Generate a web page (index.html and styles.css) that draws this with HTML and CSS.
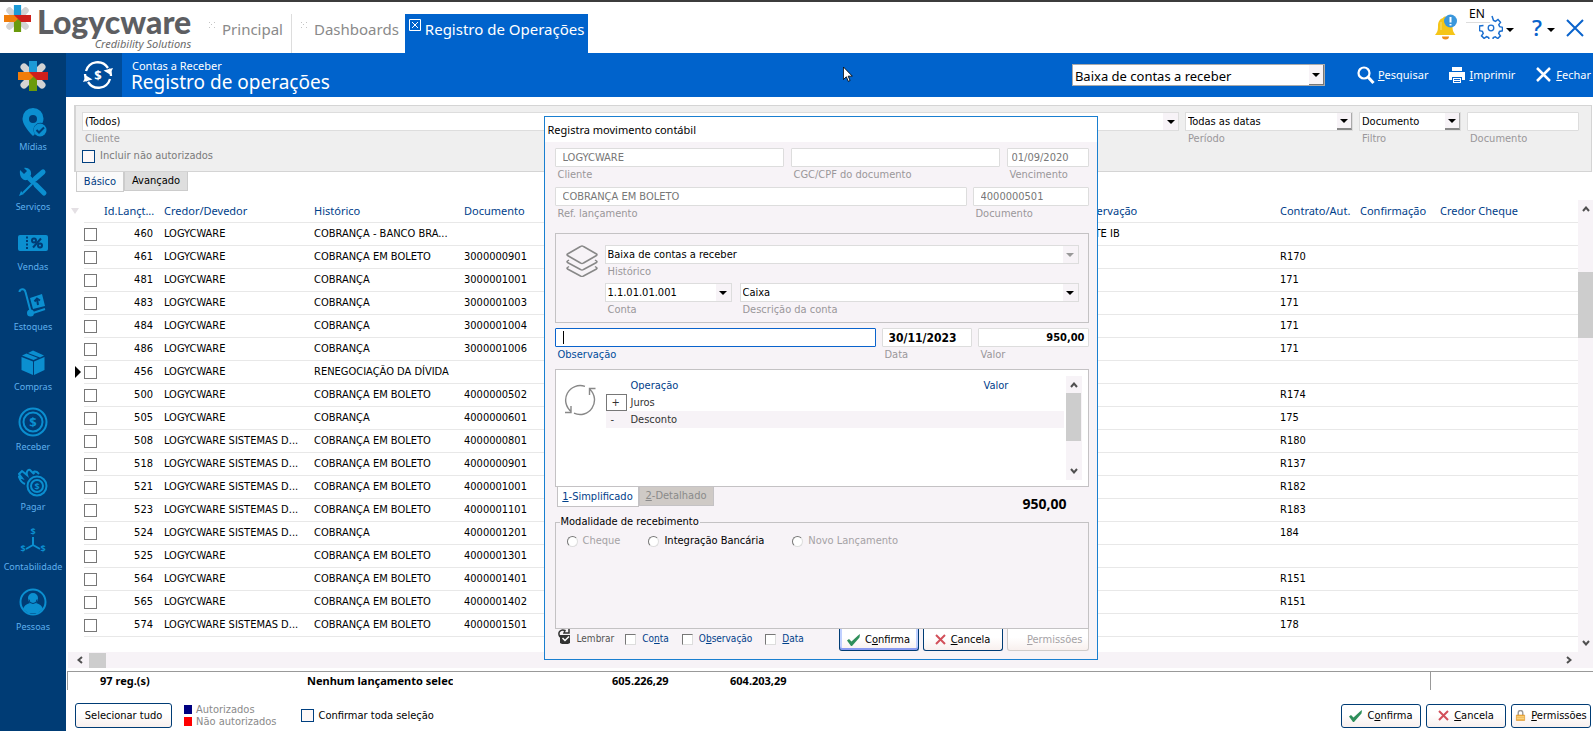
FILE: index.html
```
<!DOCTYPE html>
<html lang="pt-BR">
<head>
<meta charset="utf-8">
<title>Logycware - Registro de operações</title>
<link rel="stylesheet" href="styles.css">
</head>
<body>
<svg class="defs" aria-hidden="true">
  <symbol id="star" viewBox="0 0 30 30">
    <path stroke="#d3d3d3" stroke-width="7" stroke-linecap="round" d="M6 6l18 18M24 6 6 24"/>
    <path fill="#6a9a0b" d="M11 15h8v15h-8z"/>
    <path fill="#1c9ad6" d="M11 0h8v13h-8z"/>
    <path fill="#f07d0a" d="M0 11h12l4 4-4 4H0z"/>
    <path fill="#cf1f1b" d="M30 11H19l-8 0 8 8h11z"/>
  </symbol>
  <symbol id="check" viewBox="0 0 13 12"><path fill="#2f8f5b" d="M0 6.500 2 5l2.500 2.500L11 1.500 13 0l-.5 3.500L5 12H4z"/></symbol>
  <symbol id="cross" viewBox="0 0 11 11"><path d="M1 1l9 9M10 1 1 10" stroke="#d2505a" stroke-width="2" fill="none"/></symbol>
  <symbol id="lock" viewBox="0 0 10 12"><path d="M2.500 6V3a2.500 2.500 0 0 1 5 0v3" fill="none" stroke="#999" stroke-width="1.500"/><path fill="#f0b040" stroke="#d98c20" stroke-width=".6" d="M.5 5.500h9v6h-9z"/><path stroke="#fbe0a0" d="M1 7.500h8M1 9.500h8"/></symbol>
  <symbol id="chev-up" viewBox="0 0 8 6"><path d="M1 5l3-3.500L7 5" fill="none" stroke="#505050" stroke-width="2"/></symbol>
  <symbol id="chev-down" viewBox="0 0 8 6"><path d="M1 1l3 3.500L7 1" fill="none" stroke="#505050" stroke-width="2"/></symbol>
  <symbol id="chev-left" viewBox="0 0 6 8"><path d="M5 1 1.500 4 5 7" fill="none" stroke="#505050" stroke-width="2"/></symbol>
  <symbol id="chev-right" viewBox="0 0 6 8"><path d="M1 1l3.500 3L1 7" fill="none" stroke="#505050" stroke-width="2"/></symbol>
</svg>

<header class="top">
  <a class="brand" href="#">
    <svg class="brand-star"><use href="#star"/></svg>
    <span class="brand-text"><span class="brand-name">Logycware</span><span class="brand-tag">Credibility Solutions</span></span>
  </a>
  <nav class="tabs">
    <a class="tab" href="#"><svg class="grip" viewBox="0 0 6 6"><path d="M0 0h1v1H0zM5 0h1v1H5zM2 2h1v1H2zM0 5h1v1H0zM5 5h1v1H5z"/></svg>Principal</a>
    <a class="tab tab-div" href="#"><svg class="grip" viewBox="0 0 6 6"><path d="M0 0h1v1H0zM5 0h1v1H5zM2 2h1v1H2zM0 5h1v1H0zM5 5h1v1H5z"/></svg>Dashboards</a>
    <a class="tab tab-on" href="#"><svg class="tab-close" viewBox="0 0 12 12"><path d="M.5.5h11v11H.5zM3 3l6 6M9 3 3 9" fill="none" stroke="#fff"/></svg>Registro de Operações</a>
  </nav>
  <div class="tools">
    <svg class="bell" viewBox="0 0 22 26"><path fill="#f5c518" d="M10 2.500a2 2 0 0 1 2 1.500c4 1 5.500 4 5.500 8 0 5 1 6.500 3 9H0c2-2.500 3-4 3-9 0-4 1.500-7 5-8a2 2 0 0 1 2-1.500z"/><path fill="#ee8c1c" d="M7 22.500h7a3.500 3 0 0 1-7 0z"/><path stroke="#f9df7b" d="M6 8v8"/><circle cx="15.500" cy="7" r="6.500" fill="#3a97dc"/><path d="M15.500 3v5.500M15.500 10v1.500" stroke="#fff" stroke-width="2"/></svg>
    <span class="lang">EN</span>
    <svg class="gear" viewBox="0 0 24 24"><path fill="none" stroke="#1b6fd0" stroke-width="1.500" d="M13 1l1.500 4.500 2 .8 2.500-1.800 2.500 2.700-1.700 2.500.9 2 2.800.6v3.500l-3 .6-.8 2 1.700 2.500-2.600 2.600-2.500-1.700-2 .8-.6 2.800h-3.500l-.6-2.900-2-.8-2.500 1.700-2.600-2.600 1.700-2.500-.8-2-2.900-.6V11l4-.6"/><circle cx="12" cy="13" r="2.800" fill="none" stroke="#1b6fd0" stroke-width="1.300"/></svg>
    <span class="arrow"></span>
    <span class="help">?</span>
    <span class="arrow"></span>
    <svg class="win-x" viewBox="0 0 18 18"><path d="M1 1l16 16M17 1 1 17" stroke="#0a63cc" stroke-width="2"/></svg>
  </div>
</header>

<div class="shell">
  <aside class="side">
    <a class="side-logo" href="#"><svg viewBox="0 0 30 30"><use href="#star"/></svg></a>
    <a class="side-item" href="#"><svg viewBox="0 0 30 30"><path fill-rule="evenodd" d="M15 1a10.500 10.500 0 0 1 10.500 10.500c0 1.500-.3 3-1 4.500A7 7 0 0 0 17 27l-2 2C8 22 4.500 16 4.500 11.500A10.500 10.500 0 0 1 15 1zm0 7a4 4 0 1 0 0 8 4 4 0 0 0 0-8z"/><circle cx="22" cy="23" r="6.500"/><path class="cut" d="m18.500 23 2.500 2.500 5-5"/></svg>Mídias</a>
    <a class="side-item" href="#"><svg viewBox="0 0 30 30"><path class="ln5" d="m9 9 6 6M18 18l8 8"/><path d="M2 3l4 4 3-3-3-3c4-1 8 2 7 7l-4 5C5 14 1 10 2 3z"/><path class="ln5" d="m17 12 8-7"/><path class="ln2" d="m14 17-9 9"/><path d="m1 29 2-5 3 3z"/></svg>Serviços</a>
    <a class="side-item" href="#"><svg viewBox="0 0 30 30"><rect y="8" width="30" height="16" rx="2"/><path class="cut" stroke-dasharray="2 1.500" d="M9 9.500v13"/><circle class="cut" cx="16" cy="13.500" r="2"/><circle class="cut" cx="22" cy="18.500" r="2"/><path class="cut" d="M23 11.500l-8 9"/></svg>Vendas</a>
    <a class="side-item" href="#"><svg viewBox="0 0 30 30"><path class="ln2" d="M1.500 5c0-3 5-4.500 6 0l5 19M15 26l12-4"/><circle cx="12.500" cy="26" r="3.500"/><path d="m12 11 12-4 3 12-12 3z"/><path class="cut" d="m20 18-1-6M16.500 14.500l2.500-3 3 2"/></svg>Estoques</a>
    <a class="side-item" href="#"><svg viewBox="0 0 30 30"><path d="M3.500 10 15 14.500V28L3.500 23zM26.500 10 16 14.500V28l10.500-5zM4 8.500l4.500-2L20 11l-4.500 2zM10 6l5-2.500L26 8.500l-4 2z"/></svg>Compras</a>
    <a class="side-item" href="#"><svg viewBox="0 0 30 30"><circle class="ln2" cx="15" cy="15" r="13.500"/><circle class="ln2" cx="15" cy="15" r="9.500"/><text x="15" y="19.500">$</text></svg>Receber</a>
    <a class="side-item" href="#"><svg viewBox="0 0 30 30"><circle class="ln2" cx="19" cy="19" r="9.500"/><circle class="ln2" cx="19" cy="19" r="6"/><text class="sm" x="19" y="23">$</text><path class="ln2" d="M7 17c-3-1-5-4-6-7l3 1-3-4 3-3 5 4c-1-3 1-6 3-5l4 4c-1-3 1-3 3-2l2 2"/></svg>Pagar</a>
    <a class="side-item" href="#"><svg viewBox="0 0 30 30"><path class="ln2" d="M15 10v8M15 18l-7 4M15 18l7 4"/><text class="sm" x="15" y="8">$</text><text class="sm" x="5" y="25">$</text><text class="sm" x="25" y="25">$</text></svg>Contabilidade</a>
    <a class="side-item" href="#"><svg viewBox="0 0 30 30"><circle class="ln2" cx="15" cy="15" r="12.500"/><path d="M10 11a5 5 0 0 1 10 0c0 2-1 4-2 5 4 1 6 3 7 6l-5 4H10l-5-4c1-3 3-5 7-6-1-1-2-3-2-5z"/><path class="cut thin" d="M11 12.500a4 4 0 0 0 8 0"/></svg>Pessoas</a>
  </aside>

  <main class="main">
    <div class="bar">
      <div class="bar-icon"><svg viewBox="0 0 32 30" fill="none" stroke="#fff" stroke-width="2.300"><path d="M4 11C7 1 20-1 26 8M28 19C25 29 12 31 6 22M5 21a12 12 0 0 1-2-7M27 9a12 12 0 0 1 2 7"/><path fill="#fff" stroke="none" d="m31 8-3 6.500-6.500-4zM1 22l3-6.500 6.500 4z"/><text x="16" y="20">$</text></svg></div>
      <div class="bar-title"><span class="bar-sub">Contas a Receber</span><h1>Registro de operações</h1></div>
      <div class="combo combo-bar"><select aria-label="Operação"><option>Baixa de contas a receber</option></select><span class="combo-btn"><i class="arrow"></i></span></div>
      <div class="bar-actions">
        <button type="button"><svg viewBox="0 0 18 18" fill="none" stroke="#fff"><circle cx="7" cy="7" r="5.500" stroke-width="2.200"/><path d="m11 11 5.500 6" stroke-width="3"/></svg><span><u>P</u>esquisar</span></button>
        <button type="button"><svg viewBox="0 0 18 18" fill="#fff"><path d="M4 1h10v4H4zM1 6h16v8h-3v-3H4v3H1zM5 12h8v5H5z"/><path d="M6 13.500h6M6 15.500h6" stroke="#0a63cc"/></svg><span><u>I</u>mprimir</span></button>
        <button type="button"><svg viewBox="0 0 18 18" stroke="#fff" stroke-width="2.500"><path d="m2 2 13 13M15 2 2 15"/></svg><span><u>F</u>echar</span></button>
      </div>
    </div>

    <section class="filters">
      <div class="filter-row">
        <div class="field grow"><div class="combo"><select id="f-cli"><option>(Todos)</option></select><span class="combo-btn"><i class="arrow"></i></span></div><label for="f-cli">Cliente</label></div>
        <div class="field w-per"><div class="combo"><select id="f-per"><option>Todas as datas</option></select><span class="combo-btn shade"><i class="arrow"></i></span></div><label for="f-per">Período</label></div>
        <div class="field w-fil"><div class="combo"><select id="f-fil"><option>Documento</option></select><span class="combo-btn shade"><i class="arrow"></i></span></div><label for="f-fil">Filtro</label></div>
        <div class="field w-doc"><input id="f-doc" type="text"><label for="f-doc">Documento</label></div>
      </div>
      <label class="check muted"><input class="box blue" type="checkbox">Incluir não autorizados</label>
    </section>
    <div class="subtabs"><button class="subtab subtab-on" type="button">Básico</button><button class="subtab" type="button">Avançado</button></div>

    <section class="grid-area">
      <div class="grid-scroll">
        <table class="grid">
          <colgroup><col class="c-mark"><col class="c-chk"><col class="c-id"><col class="c-name"><col class="c-name"><col class="c-doc"><col><col class="c-obs"><col class="c-sm"><col class="c-sm"><col class="c-last"></colgroup>
          <thead><tr><th><i class="funnel"></i></th><th></th><th class="th-id">Id.Lançt...</th><th>Credor/Devedor</th><th>Histórico</th><th>Documento</th><th></th><th>Observação</th><th>Contrato/Aut.</th><th>Confirmação</th><th>Credor Cheque</th></tr></thead>
          <tbody>
            <tr><td></td><td><input class="box" type="checkbox" aria-label="460"></td><td>460</td><td>LOGYCWARE</td><td>COBRANÇA - BANCO BRA...</td><td></td><td></td><td>TESTE IB</td><td></td><td></td><td></td></tr>
            <tr><td></td><td><input class="box" type="checkbox" aria-label="461"></td><td>461</td><td>LOGYCWARE</td><td>COBRANÇA EM BOLETO</td><td>3000000901</td><td></td><td></td><td>R170</td><td></td><td></td></tr>
            <tr><td></td><td><input class="box" type="checkbox" aria-label="481"></td><td>481</td><td>LOGYCWARE</td><td>COBRANÇA</td><td>3000001001</td><td></td><td></td><td>171</td><td></td><td></td></tr>
            <tr><td></td><td><input class="box" type="checkbox" aria-label="483"></td><td>483</td><td>LOGYCWARE</td><td>COBRANÇA</td><td>3000001003</td><td></td><td></td><td>171</td><td></td><td></td></tr>
            <tr><td></td><td><input class="box" type="checkbox" aria-label="484"></td><td>484</td><td>LOGYCWARE</td><td>COBRANÇA</td><td>3000001004</td><td></td><td></td><td>171</td><td></td><td></td></tr>
            <tr><td></td><td><input class="box" type="checkbox" aria-label="486"></td><td>486</td><td>LOGYCWARE</td><td>COBRANÇA</td><td>3000001006</td><td></td><td></td><td>171</td><td></td><td></td></tr>
            <tr><td><i class="current"></i></td><td><input class="box" type="checkbox" aria-label="456"></td><td>456</td><td>LOGYCWARE</td><td>RENEGOCIAÇÃO DA DÍVIDA</td><td></td><td></td><td></td><td></td><td></td><td></td></tr>
            <tr><td></td><td><input class="box" type="checkbox" aria-label="500"></td><td>500</td><td>LOGYCWARE</td><td>COBRANÇA EM BOLETO</td><td>4000000502</td><td></td><td></td><td>R174</td><td></td><td></td></tr>
            <tr><td></td><td><input class="box" type="checkbox" aria-label="505"></td><td>505</td><td>LOGYCWARE</td><td>COBRANÇA</td><td>4000000601</td><td></td><td></td><td>175</td><td></td><td></td></tr>
            <tr><td></td><td><input class="box" type="checkbox" aria-label="508"></td><td>508</td><td>LOGYCWARE SISTEMAS D...</td><td>COBRANÇA EM BOLETO</td><td>4000000801</td><td></td><td></td><td>R180</td><td></td><td></td></tr>
            <tr><td></td><td><input class="box" type="checkbox" aria-label="518"></td><td>518</td><td>LOGYCWARE SISTEMAS D...</td><td>COBRANÇA EM BOLETO</td><td>4000000901</td><td></td><td></td><td>R137</td><td></td><td></td></tr>
            <tr><td></td><td><input class="box" type="checkbox" aria-label="521"></td><td>521</td><td>LOGYCWARE SISTEMAS D...</td><td>COBRANÇA EM BOLETO</td><td>4000001001</td><td></td><td></td><td>R182</td><td></td><td></td></tr>
            <tr><td></td><td><input class="box" type="checkbox" aria-label="523"></td><td>523</td><td>LOGYCWARE SISTEMAS D...</td><td>COBRANÇA EM BOLETO</td><td>4000001101</td><td></td><td></td><td>R183</td><td></td><td></td></tr>
            <tr><td></td><td><input class="box" type="checkbox" aria-label="524"></td><td>524</td><td>LOGYCWARE SISTEMAS D...</td><td>COBRANÇA</td><td>4000001201</td><td></td><td></td><td>184</td><td></td><td></td></tr>
            <tr><td></td><td><input class="box" type="checkbox" aria-label="525"></td><td>525</td><td>LOGYCWARE</td><td>COBRANÇA EM BOLETO</td><td>4000001301</td><td></td><td></td><td></td><td></td><td></td></tr>
            <tr><td></td><td><input class="box" type="checkbox" aria-label="564"></td><td>564</td><td>LOGYCWARE</td><td>COBRANÇA EM BOLETO</td><td>4000001401</td><td></td><td></td><td>R151</td><td></td><td></td></tr>
            <tr><td></td><td><input class="box" type="checkbox" aria-label="565"></td><td>565</td><td>LOGYCWARE</td><td>COBRANÇA EM BOLETO</td><td>4000001402</td><td></td><td></td><td>R151</td><td></td><td></td></tr>
            <tr><td></td><td><input class="box" type="checkbox" aria-label="574"></td><td>574</td><td>LOGYCWARE SISTEMAS D...</td><td>COBRANÇA EM BOLETO</td><td>4000001501</td><td></td><td></td><td>178</td><td></td><td></td></tr>
          </tbody>
        </table>
      </div>
      <div class="vbar"><svg class="ch"><use href="#chev-up"/></svg><i class="vthumb"></i><svg class="ch ch-end"><use href="#chev-down"/></svg></div>
      <div class="hbar"><svg class="cv"><use href="#chev-left"/></svg><i class="hthumb"></i><svg class="cv ch-right"><use href="#chev-right"/></svg></div>
    </section>

    <div class="totals"><span class="t-count">97 reg.(s)</span><span class="t-msg">Nenhum lançamento selecionado</span><span class="t-a">605.226,29</span><span class="t-b">604.203,29</span><span class="t-end"></span></div>

    <footer class="foot">
      <button class="btn btn-all" type="button">Selecionar tudo</button>
      <ul class="legend"><li><i class="sq navy"></i>Autorizados</li><li><i class="sq red"></i>Não autorizados</li></ul>
      <label class="check"><input class="box blue" type="checkbox">Confirmar toda seleção</label>
      <div class="foot-btns">
        <button class="btn" type="button"><svg class="i13"><use href="#check"/></svg><span>C<u>o</u>nfirma</span></button>
        <button class="btn" type="button"><svg class="i11"><use href="#cross"/></svg><span><u>C</u>ancela</span></button>
        <button class="btn" type="button"><svg class="i11"><use href="#lock"/></svg><span><u>P</u>ermissões</span></button>
      </div>
    </footer>
  </main>
</div>

<section class="modal" role="dialog" aria-labelledby="m-title">
  <h2 id="m-title">Registra movimento contábil</h2>
  <form class="m-body">
    <div class="m-row r1">
      <div class="field"><input class="ro" id="m1" type="text" value="LOGYCWARE" readonly><label for="m1">Cliente</label></div>
      <div class="field"><input class="ro" id="m2" type="text" readonly><label for="m2">CGC/CPF do documento</label></div>
      <div class="field"><input class="ro tight" id="m3" type="text" value="01/09/2020" readonly><label for="m3">Vencimento</label></div>
    </div>
    <div class="m-row r2">
      <div class="field"><input class="ro" id="m4" type="text" value="COBRANÇA EM BOLETO" readonly><label for="m4">Ref. lançamento</label></div>
      <div class="field"><input class="ro" id="m5" type="text" value="4000000501" readonly><label for="m5">Documento</label></div>
    </div>
    <div class="group">
      <svg class="layers" viewBox="0 0 32 32" fill="none" stroke="#888" stroke-width="1.500" stroke-linejoin="round"><path d="M14.500 1.500q1.500-1 3 0L30.500 9q1 .6 0 1.500L17.500 18q-1.500 1-3 0L1.500 10.500q-1-1 0-1.500zM3 15l-1.500 1q-1 .7 0 1.500l13 7q1.500 1 3 0l13-7q1-.8 0-1.500L29 15M3 21.500l-1.500 1q-1 .7 0 1.500l13 7q1.500 1 3 0l13-7q1-.8 0-1.500l-1.500-1"/></svg>
      <div class="group-fields">
        <div class="field"><div class="combo off"><select id="m6"><option>Baixa de contas a receber</option></select><span class="combo-btn"><i class="arrow"></i></span></div><label for="m6">Histórico</label></div>
        <div class="m-row r3">
          <div class="field"><div class="combo"><select id="m7"><option>1.1.01.01.001</option></select><span class="combo-btn"><i class="arrow"></i></span></div><label for="m7">Conta</label></div>
          <div class="field"><div class="combo"><select id="m8"><option>Caixa</option></select><span class="combo-btn"><i class="arrow"></i></span></div><label for="m8">Descrição da conta</label></div>
        </div>
      </div>
    </div>
    <div class="m-row r4">
      <div class="field focus"><div class="caret-box"><i class="caret"></i><input id="m9" type="text"></div><label for="m9">Observação</label></div>
      <div class="field"><input class="strong center" id="m10" type="text" value="30/11/2023"><label for="m10">Data</label></div>
      <div class="field"><input class="strong right" id="m11" type="text" value="950,00"><label for="m11">Valor</label></div>
    </div>
    <div class="ops">
      <svg class="cycle" viewBox="0 0 32 32" fill="none" stroke="#888" stroke-width="1.400"><path d="M7.500 27.700A14.500 14.500 0 0 1 21 2.400M26 5.500A14.500 14.500 0 0 1 10 29.200M25.500 11V4.500h6M7 22v6.500H1"/></svg>
      <table class="op-table">
        <thead><tr><th></th><th>Operação</th><th>Valor</th></tr></thead>
        <tbody><tr><td class="op-sel">+</td><td>Juros</td><td></td></tr><tr class="alt"><td>-</td><td>Desconto</td><td></td></tr></tbody>
      </table>
      <div class="op-bar"><svg class="ch"><use href="#chev-up"/></svg><i class="op-thumb"></i><svg class="ch ch-end"><use href="#chev-down"/></svg></div>
    </div>
    <div class="op-foot"><button class="op-tab op-on" type="button"><u>1</u>-Simplificado</button><button class="op-tab" type="button" disabled><u>2</u>-Detalhado</button><output class="sum">950,00</output></div>
    <fieldset class="mode">
      <legend>Modalidade de recebimento</legend>
      <label class="radio off"><input type="radio" name="mode" disabled>Cheque</label>
      <label class="radio"><input type="radio" name="mode">Integração Bancária</label>
      <label class="radio off"><input type="radio" name="mode" disabled>Novo Lançamento</label>
    </fieldset>
    <div class="m-foot">
      <svg class="remember" viewBox="0 0 13 15"><path fill="#333" d="M2 6h10v8l-2 1H4l-2-1z"/><path d="M2 8C-1 3 3 0 7 1.500L6 4h5V0" fill="none" stroke="#333" stroke-width="1.500"/><path d="m4.500 9 2.500 2.500L11 7.500" stroke="#fff" stroke-width="1.500" fill="none"/></svg>
      <span class="rem-text">Lembrar</span>
      <label class="mcheck"><input type="checkbox"><span>Co<u>n</u>ta</span></label>
      <label class="mcheck"><input type="checkbox"><span>O<u>b</u>servação</span></label>
      <label class="mcheck"><input type="checkbox"><span><u>D</u>ata</span></label>
      <div class="m-btns">
        <button class="btn btn-def" type="button"><svg class="i13"><use href="#check"/></svg><span>C<u>o</u>nfirma</span></button>
        <button class="btn" type="button"><svg class="i11"><use href="#cross"/></svg><span><u>C</u>ancela</span></button>
        <button class="btn btn-off" type="button" disabled><span><u>P</u>ermissões</span></button>
      </div>
    </div>
  </form>
</section>

<svg class="pointer" viewBox="0 0 12 19"><path d="M.5.500v15l3.500-3.300 2.300 5.500 2.200-1-2.300-5.200h5z" fill="#fff" stroke="#000"/></svg>
</body>
</html>
```
FILE: styles.css
```
* { box-sizing: border-box; }
body {
  margin: 0;
  min-height: 100vh;
  display: flex;
  flex-direction: column;
  background: #fff;
  color: #000;
  font: 11px/14px "DejaVu Sans Condensed", "DejaVu Sans", sans-serif;
  position: relative;
}
a { color: inherit; text-decoration: none; }
button, input, select { font: inherit; color: inherit; margin: 0; }
button { border: 0; padding: 0; background: none; }
svg { display: block; flex: none; }
i { display: block; flex: none; }
h1, h2 { margin: 0; font-weight: 400; }
ul { margin: 0; padding: 0; list-style: none; }
.defs { position: absolute; width: 0; height: 0; }
.arrow { width: 0; height: 0; border: 4px solid transparent; border-top-color: #000; border-bottom: 0; }

.top { height: 53px; border-top: 2px solid #3c3c3c; display: flex; align-items: flex-end; }
.brand { width: 204px; height: 51px; padding: 3px 0 0 4px; display: flex; gap: 6px; }
.brand-star { width: 27px; height: 27px; }
.brand-text { display: flex; flex-direction: column; align-items: flex-end; }
.brand-name { font: 900 32px/33px Lato, sans-serif; color: #5d5e62; }
.brand-tag { font: italic 11px/12px "Noto Sans", sans-serif; color: #6b6b6b; }
.tabs { display: flex; align-items: flex-end; font: 15px/20px "Noto Sans", sans-serif; color: #8a8a8a; }
.tab { height: 39px; display: flex; gap: 7px; padding: 5px 8px 0 5px; }
.tab-div { border-left: 1px solid #ddd; padding: 5px 6px 0 9px; }
.tab-on { background: #0063cc; color: #fff; padding: 5px 4px 0; gap: 4px; }
.grip { width: 6px; height: 6px; fill: #c4c4c4; margin-top: 3px; }
.tab-close { width: 12px; height: 12px; }
.tools { margin-left: auto; height: 51px; display: flex; align-items: flex-start; padding: 12px 9px 0 0; }
.bell { width: 22px; height: 26px; margin-right: 9px; }
.lang { width: 24px; height: 16px; margin-top: -7px; padding-left: 3px; font: 12px/14px "Noto Sans", sans-serif; border-bottom: 1px solid #ddd; }
.gear { width: 24px; height: 24px; margin: 1px 3px 0 -11px; }
.tools .arrow { margin-top: 14px; }
.help { font: 600 22px/26px "Open Sans", sans-serif; color: #0a63cc; margin: 0 5px 0 18px; }
.win-x { width: 18px; height: 18px; margin: 5px 0 0 11px; }

.shell { flex: 1; display: flex; }
.side { width: 66px; flex: none; background: #003c75; color: #5fb0ee; display: flex; flex-direction: column; align-items: center; font: 9px/12px "Noto Sans", sans-serif; padding-top: 8px; }
.side-logo { height: 46px; }
.side-logo svg { width: 30px; height: 30px; }
.side-item { height: 60px; display: flex; flex-direction: column; align-items: center; gap: 4px; }
.side-item svg { width: 30px; height: 30px; fill: #0b8fd0; }
.side-item text, .bar-icon text { font: 700 13px "Open Sans", sans-serif; text-anchor: middle; }
.side-item .sm { font-size: 9px; }
.ln2, .ln5 { fill: none; stroke: #0b8fd0; stroke-width: 2; }
.ln5 { stroke-width: 5; stroke-linecap: round; }
.cut { fill: none; stroke: #003c75; stroke-width: 2; }
.thin { stroke-width: 1; }

.main { flex: 1; min-width: 0; display: flex; flex-direction: column; }
.bar { height: 44px; background: #0063cc; color: #fff; display: flex; align-items: center; font-family: "Noto Sans", sans-serif; }
.bar-icon { width: 56px; height: 44px; background: #004c9a; display: flex; align-items: center; padding-left: 16px; }
.bar-icon svg { width: 32px; height: 30px; }
.bar-icon text { fill: #fff; stroke: none; }
.bar-title { padding-left: 9px; flex: 1; display: flex; flex-direction: column; }
.bar-sub { font-size: 11px; line-height: 13px; padding-left: 1px; }
.bar h1 { font-size: 19px; line-height: 20px; }
.bar-actions { display: flex; gap: 20px; margin-left: 32px; padding-right: 2px; font-size: 11px; }
.bar-actions button { display: flex; align-items: center; gap: 3px; }
.bar-actions svg { width: 18px; height: 18px; }

.combo { display: flex; height: 19px; background: #fff; border: 1px solid #ddd; }
.combo select { flex: 1; min-width: 0; appearance: none; border: 0; background: none; padding: 1px 2px 0; outline: 0; color: #000; }
.combo-btn { width: 15px; background: #f7f3f7; display: grid; place-items: center; }
.combo-btn.shade { border-bottom: 2px solid #888; border-right: 1px solid #aaa; }
.combo.off .arrow { border-top-color: #999; }
.combo-bar { width: 253px; height: 22px; font-size: 13px; border: 1px solid #aaa; }
.combo-bar .combo-btn { border-right: 1px solid #777; border-bottom: 1px solid #777; }

.field { display: flex; flex-direction: column; gap: 1px; min-width: 0; }
.field label { color: #9a979a; padding-left: 3px; }
.field input { width: 100%; height: 19px; border: 1px solid #ddd; border-radius: 1px; background: #fff; padding: 0 7px; outline: 0; }
.filters { margin: 8px 1px 0 8px; padding: 6px 12px 0 6px; height: 67px; background: #efefef; border: 1px solid #d4d4d4; border-left-width: 2px; }
.filter-row { display: flex; gap: 6px; }
.grow { flex: 1; }
.w-per { width: 168px; }
.w-fil { width: 102px; }
.w-doc { width: 112px; }
.check { display: flex; align-items: center; gap: 5px; }
.filters .check { margin-top: 3px; }
.muted { color: #7a7a7a; }
.box { appearance: none; width: 13px; height: 13px; border: 1px solid #777; background: #fff; display: block; flex: none; }
.box.blue { border-color: #004080; background: #fdf8f8; }
.subtabs { display: flex; align-items: flex-start; padding-left: 10px; height: 28px; }
.subtab { width: 64px; height: 19px; background: #dedede; border: 1px solid #ccc; border-top: 0; }
.subtab-on { width: 48px; height: 20px; background: #fafafa; color: #003c82; }

.grid-area { flex: 1; display: grid; grid-template-columns: 1fr 15px; grid-template-rows: 1fr 16px; padding-left: 2px; }
.grid { width: 100%; table-layout: fixed; border-collapse: separate; border-spacing: 0; }
.c-mark { width: 16px; }
.c-chk { width: 17px; }
.c-id { width: 57px; }
.c-name { width: 150px; }
.c-doc { width: 94px; }
.c-obs { width: 204px; }
.c-sm { width: 80px; }
.c-last { width: 144px; }
.grid th, .grid td { height: 23px; padding: 0 5px 0 6px; border-bottom: 1px solid #e8e8e8; white-space: nowrap; overflow: hidden; text-align: left; font-weight: 400; }
.grid th { color: #00408a; font: 11px/14px "Noto Sans", sans-serif; }
.grid th:first-child, .grid td:first-child { border-bottom-color: transparent; padding: 0; }
.grid td:nth-child(2) { padding: 0; }
.grid td:nth-child(3) { text-align: right; }
.grid .th-id { padding: 0 0 0 3px; }
.funnel { margin: 0 3px; width: 0; border: 4px solid transparent; border-top: 6px solid #e4e0e4; border-bottom: 0; }
.current { margin-left: 7px; width: 0; border: 6px solid transparent; border-left-color: #000; border-right: 0; }
.vbar, .op-bar { background: #f7f3f7; display: flex; flex-direction: column; align-items: center; padding: 6px 0; }
.ch { width: 8px; height: 6px; }
.ch-end { margin-top: auto; }
.vthumb { width: 15px; height: 66px; background: #cdcdcd; margin-top: 60px; }
.hbar { grid-column: 1 / 3; background: #f7f3f7; display: flex; align-items: center; padding: 0 21px 0 9px; }
.cv { width: 6px; height: 8px; }
.hthumb { width: 17px; height: 15px; background: #cdcdcd; margin-left: 6px; }
.ch-right { margin-left: auto; }

.totals { margin: 3px 0 0 1px; height: 19px; border-top: 1px solid #999; border-left: 1px solid #999; display: flex; align-items: center; font: 700 11px/18px "Noto Sans", sans-serif; white-space: nowrap; }
.t-count { width: 239px; padding-left: 32px; }
.t-msg { width: 146px; overflow: hidden; }
.t-a { width: 277px; padding-left: 159px; }
.t-end { margin-left: auto; width: 163px; height: 18px; border-left: 1px solid #999; }
.foot { height: 41px; padding: 10px 2px 0 9px; display: flex; align-items: center; }
.btn { width: 80px; height: 24px; border: 1px solid #003c75; border-radius: 3px; background: linear-gradient(#fff 40%, #f8f0ee); display: flex; align-items: center; justify-content: center; gap: 5px; }
.btn-all { width: 97px; height: 25px; }
.i13 { width: 13px; height: 12px; }
.i11 { width: 11px; height: 11px; }
.legend { margin: 0 24px 0 12px; color: #8a8a8a; line-height: 12px; }
.legend li { display: flex; align-items: center; gap: 4px; }
.sq { width: 8px; height: 9px; }
.navy { background: #000080; }
.red { background: #f00; }
.foot-btns { margin-left: auto; display: flex; gap: 5px; }

.modal { position: absolute; top: 116px; left: calc(50% - 253px); width: 554px; background: #f7f3f7; border: 1px solid #1a7fd0; }
.modal h2 { height: 25px; background: #fff; padding-left: 3px; font: 11px/25px "Noto Sans", sans-serif; }
.m-body { padding: 6px 8px 8px 10px; }
.m-row { display: grid; gap: 6px; }
.r1 { grid-template-columns: 229px 1fr 82px; gap: 7px; }
.r2 { grid-template-columns: 1fr 116px; margin-top: 5px; }
.r3 { grid-template-columns: 127px 1fr; gap: 8px; margin-top: 4px; }
.r4 { grid-template-columns: 1fr 90px 111px; margin-top: 5px; }
.ro { color: #777; }
.field .tight { padding: 0 4px; }
.field .strong { font-weight: 700; font-size: 12px; }
.field .center { text-align: left; padding: 0 6px; }
.field .right { text-align: right; padding: 0 3px; font-size: 11px; }
.group { margin-top: 12px; height: 90px; border: 1px solid #c4c2c4; padding: 11px 9px 0 10px; display: flex; gap: 7px; }
.layers { width: 32px; height: 32px; }
.group-fields { flex: 1; }
.caret-box { display: flex; align-items: center; height: 19px; border: 1px solid #0a63cc; background: #fff; border-radius: 1px; padding-left: 7px; }
.caret { width: 1px; height: 13px; background: #000; }
.caret-box input { border: 0; height: 17px; padding: 0; }
.focus label { color: #004c9a; }
.ops { margin-top: 7px; height: 118px; background: #fff; border: 1px solid #c4c2c4; padding: 6px; display: flex; }
.cycle { width: 32px; height: 32px; margin: 8px 10px 0 2px; }
.op-table { flex: 1; align-self: flex-start; table-layout: fixed; border-spacing: 0; color: #333; margin-top: 1px; }
.op-table th, .op-table td { height: 17px; padding: 0 4px; font-weight: 400; text-align: left; }
.op-table th { color: #00408a; }
.op-table td:first-child { padding: 0 5px; }
.op-table th:first-child { width: 21px; }
.op-table th:last-child { width: 84px; }
.op-table .op-sel { border: 1px solid #777; }
.alt td { background: #f7f3f7; }
.op-bar { width: 16px; margin-left: 2px; }
.op-thumb { width: 15px; height: 48px; background: #cdcdcd; margin-top: 5px; }
.op-foot { display: flex; padding-left: 2px; height: 28px; }
.op-tab { height: 19px; width: 75px; background: #cfcac6; color: #8a8a8a; border: 1px solid #c4c2c4; border-top: 0; }
.op-on { background: #fff; color: #00408a; height: 20px; width: 82px; }
.sum { margin: 9px 22px 0 auto; font: 700 14px/16px "Noto Sans", sans-serif; }
.mode { margin: 0; min-width: 0; height: 114px; border: 1px solid #c4c2c4; padding: 5px 12px 0 11px; display: flex; gap: 28px; align-items: flex-start; }
.mode legend { padding: 0 1px; margin-left: -7px; }
.radio { display: flex; gap: 5px; align-items: center; }
.radio input { appearance: none; width: 11px; height: 11px; border-radius: 50%; border: 1px solid #777; border-right-color: #ddd; border-bottom-color: #ddd; background: #fff; }
.radio.off { color: #a5a2a5; }
.m-foot { display: flex; height: 22px; padding-left: 3px; font-size: 10px; }
.remember { width: 13px; height: 15px; margin-right: 6px; }
.rem-text { margin: 3px 11px 0 0; color: #555; }
.mcheck { display: flex; align-items: center; gap: 6px; margin-right: 13px; color: #00408a; height: 20px; }
.mcheck input { appearance: none; width: 11px; height: 11px; background: #fff; border: 1px solid #777; border-right-color: #ddd; border-bottom-color: #ddd; }
.m-btns { margin-left: auto; display: flex; gap: 4px; font-size: 11px; }
.m-btns .btn { height: 22px; border-top: 0; border-radius: 0 0 3px 3px; }
.m-btns .btn-def { box-shadow: inset 0 -2px #8899f0, inset 2px 0 #c0d0ff, inset -2px 0 #c0d0ff; }
.m-btns .btn-off { width: 82px; border-color: #d0ccca; color: #a5a2a5; justify-content: flex-end; padding-right: 5px; }
.pointer { position: absolute; left: 843px; top: 66px; width: 10px; height: 17px; }
```
